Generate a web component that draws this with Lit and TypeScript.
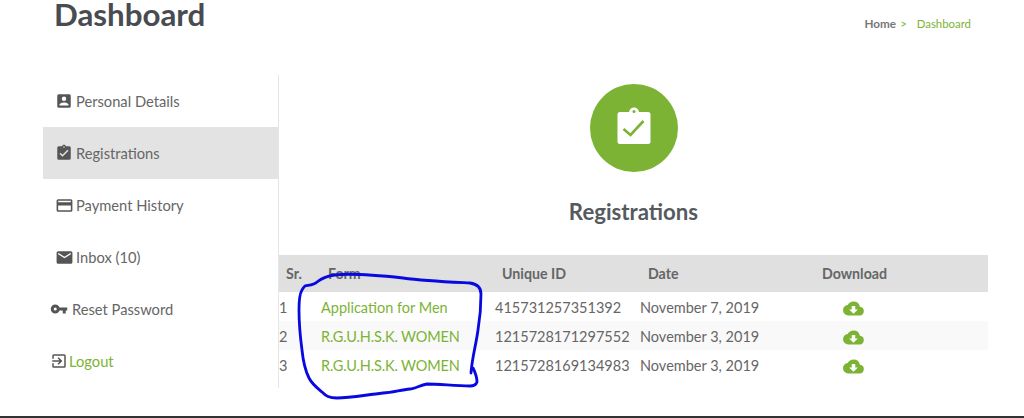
import { LitElement, html, css, svg } from "lit";
import { customElement } from "lit/decorators.js";

const I = {
  person: svg`<path d="M3 5v14a2 2 0 0 0 2 2h14a2 2 0 0 0 2-2V5a2 2 0 0 0-2-2H5a2 2 0 0 0-2 2zm12 4a3 3 0 1 1-6 0 3 3 0 0 1 6 0zm-9 8c0-2 4-3.100 6-3.100s6 1.100 6 3.100v1H6v-1z"/>`,
  clip: svg`<path d="M19 3h-4.180C14.400 1.840 13.300 1 12 1s-2.400.84-2.820 2H5a2 2 0 0 0-2 2v14a2 2 0 0 0 2 2h14a2 2 0 0 0 2-2V5a2 2 0 0 0-2-2zm-7 0a1 1 0 1 1 0 2 1 1 0 0 1 0-2zm-2 14l-4-4 1.410-1.410L10 14.170l6.590-6.590L18 9l-8 8z"/>`,
  card: svg`<path d="M20 4H4a2 2 0 0 0-2 2v12a2 2 0 0 0 2 2h16a2 2 0 0 0 2-2V6a2 2 0 0 0-2-2zm0 14H4v-6h16v6zm0-10H4V6h16v2z"/>`,
  mail: svg`<path d="M20 4H4a2 2 0 0 0-2 2v12a2 2 0 0 0 2 2h16a2 2 0 0 0 2-2V6a2 2 0 0 0-2-2zm0 4l-8 5-8-5V6l8 5 8-5v2z"/>`,
  key: svg`<path d="M12.650 10A6 6 0 0 0 7 6a6 6 0 1 0 0 12 6 6 0 0 0 5.650-4H17v4h4v-4h2v-4H12.650zM7 14a2 2 0 1 1 0-4 2 2 0 0 1 0 4z"/>`,
  exit: svg`<path d="M10.090 15.590L11.500 17l5-5-5-5-1.410 1.410L12.670 11H3v2h9.670l-2.580 2.590zM19 3H5a2 2 0 0 0-2 2v4h2V5h14v14H5v-4H3v4a2 2 0 0 0 2 2h14a2 2 0 0 0 2-2V5a2 2 0 0 0-2-2z"/>`,
  cloud: svg`<path d="M19.350 10.040A7.490 7.490 0 0 0 12 4a7.500 7.500 0 0 0-6.650 4.040A6 6 0 0 0 6 20h13a5 5 0 0 0 .35-9.960zM17 13l-5 5-5-5h3V9h4v4h3z"/>`,
};

const NAV = [
  { icon: I.person, label: "Personal Details", cls: "" },
  { icon: I.clip, label: "Registrations", cls: "active" },
  { icon: I.card, label: "Payment History", cls: "wide" },
  { icon: I.mail, label: "Inbox (10)", cls: "wide" },
  { icon: I.key, label: "Reset Password", cls: "key" },
  { icon: I.exit, label: "Logout", cls: "logout" },
];

const ROWS = [
  ["1", "Application for Men", "415731257351392", "November 7, 2019"],
  ["2", "R.G.U.H.S.K. WOMEN", "1215728171297552", "November 3, 2019"],
  ["3", "R.G.U.H.S.K. WOMEN", "1215728169134983", "November 3, 2019"],
];

@customElement("app-root")
export class AppRoot extends LitElement {
  static styles = css`
    :host {
      display: block;
      position: relative;
      width: 1024px;
      height: 418px;
      overflow: hidden;
      background: #fff;
      font-family: Lato, "Open Sans", sans-serif;
      color: #666;
      font-size: 14.500px;
    }
    .page { height: 416px; border-bottom: 2px solid #333; }
    .top {
      display: flex;
      justify-content: space-between;
      height: 74px;
      padding: 0 53px 0 54px;
    }
    h1 {
      margin: 0;
      font-size: 31.300px;
      line-height: 28px;
      font-weight: 700;
      color: #484c50;
    }
    .crumbs {
      display: flex;
      gap: 4px;
      margin-top: 17px;
      font-size: 11.400px;
      line-height: 13px;
    }
    .crumbs b { font-weight: 700; color: #777; font-size: 11.700px; }
    .crumbs .last { margin-left: 6px; }
    .green { color: #7cb335; }
    .main { display: flex; padding-left: 43px; width: 945px; }
    nav {
      width: 235px;
      height: 313px;
      border-right: 1px solid #e6e6e6;
      margin-top: 1px;
      flex: none;
    }
    .item {
      display: flex;
      align-items: center;
      gap: 3px;
      height: 52px;
      padding-left: 12px;
      font-size: 14.700px;
    }
    .item svg { width: 18px; height: 18px; fill: #555; flex: none; }
    .item.wide svg { width: 19px; height: 19px; margin: 0 -0.500px; }
    .item.active { background: #e3e3e3; }
    .item.key { padding-left: 7px; gap: 4px; }
    .item.logout { padding-left: 7px; gap: 1px; color: #7cb335; }
    .content { flex: 1; min-width: 0; }
    .badge {
      width: 88px;
      height: 88px;
      border-radius: 50%;
      background: #7cb335;
      margin: 10px auto 0;
      display: flex;
      align-items: center;
      justify-content: center;
    }
    .badge svg { width: 44px; height: 44px; }
    .badge .board { fill: #fff; }
    .badge .hole { fill: #7cb335; }
    .badge .tick { fill: none; stroke: #7cb335; stroke-width: 2.600px; }
    h2 {
      margin: 25px 0 0;
      text-align: center;
      font-size: 22.200px;
      line-height: 30px;
      font-weight: 700;
      color: #555a5e;
    }
    .grid {
      display: grid;
      grid-template-columns: 42px 174px 145px 173px 175px;
      margin-top: 28px;
    }
    .row { display: contents; }
    .head > div {
      background: #e0e0e0;
      height: 37px;
      display: flex;
      align-items: center;
      font-weight: 700;
      font-size: 14.200px;
      color: #666;
    }
    .head > div:first-child { padding-left: 7px; }
    .head .form { padding-left: 7px; }
    .head .uid { padding-left: 7px; }
    .head .date { padding-left: 8px; }
    .head .dl { padding-left: 9px; }
    .cell {
      height: 29px;
      box-sizing: border-box;
      padding-top: 2px;
      display: flex;
      align-items: center;
    }
    .row.even .cell { background: #f9f9f9; }
    .cell.form { color: #7cb335; }
    .cell.caps { letter-spacing: -0.150px; }
    .cell.dl { padding-left: 30px; padding-top: 0; }
    .cell.dl svg { width: 21px; height: 21px; fill: #7cb335; margin-top: 3px; }
    .ink {
      position: absolute;
      left: 0;
      top: 0;
      width: 1024px;
      height: 418px;
      pointer-events: none;
    }
    .ink path { fill: none; stroke: #0808e0; stroke-width: 2.800px; stroke-linejoin: round; stroke-linecap: round; }
  `;

  render() {
    return html`
      <div class="page">
        <div class="top">
          <h1>Dashboard</h1>
          <div class="crumbs"><b>Home</b><span class="green">&gt;</span><span class="green last">Dashboard</span></div>
        </div>
        <div class="main">
          <nav>
            ${NAV.map(
              (n) => html`<div class="item ${n.cls}">
                <svg viewBox="0 0 24 24">${n.icon}</svg><span>${n.label}</span>
              </div>`
            )}
          </nav>
          <div class="content">
            <div class="badge">
              <svg viewBox="0 0 44 44">
                <circle class="board" cx="22" cy="6.500" r="5"></circle>
                <rect class="board" x="5.500" y="6" width="33" height="32" rx="2.500"></rect>
                <circle class="hole" cx="22" cy="5.500" r="1.500"></circle>
                <path class="tick" d="M11.500 23l7 6 13-14"></path>
              </svg>
            </div>
            <h2>Registrations</h2>
            <div class="grid">
              <div class="row head">
                <div>Sr.</div>
                <div class="form">Form</div>
                <div class="uid">Unique ID</div>
                <div class="date">Date</div>
                <div class="dl">Download</div>
              </div>
              ${ROWS.map(
                (r, i) => html`<div class="row ${i % 2 ? "even" : ""}">
                  <div class="cell sr">${r[0]}</div>
                  <div class="cell form ${i ? "caps" : ""}">${r[1]}</div>
                  <div class="cell">${r[2]}</div>
                  <div class="cell">${r[3]}</div>
                  <div class="cell dl"><svg viewBox="0 0 24 24">${I.cloud}</svg></div>
                </div>`
              )}
            </div>
          </div>
        </div>
      </div>
      <svg class="ink" viewBox="0 0 1024 418">
        <path d="M305 286C310 285 314 285 317 282C322 278 326 276 335 275C350 273 375 275 403 278C425 281 450 282 470 283C477 284 481 288 481 294C481 305 480 318 478 330C476 345 472 358 471 373C471 370 472 368 473 368C475 372 477 378 477 382C476 385 474 386 470 386C455 386 440 384 427 384C420 385 415 389 410 389C400 390 392 393 383 393C365 395 350 398 337 398C329 398 326 396 322 392C316 387 312 384 309 378C305 370 303 360 302 350C300 335 299 320 299 310C299 300 300 293 302 290C303 288 304 287 305 286"/>
      </svg>
    `;
  }
}
